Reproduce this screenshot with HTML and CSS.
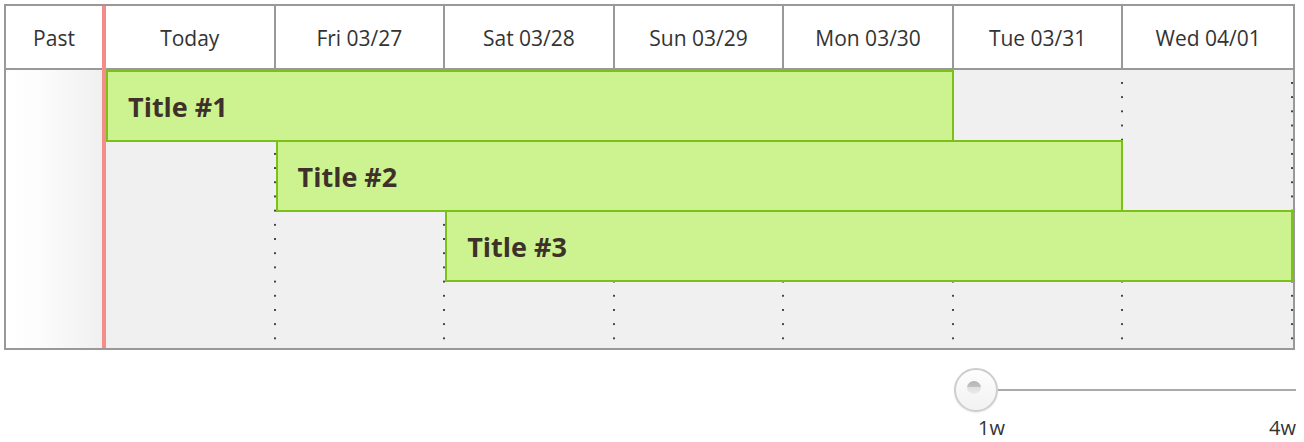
FILE: index.html
```html
<!DOCTYPE html>
<html lang="en">
<head>
<meta charset="utf-8">
<title>Timeline</title>
<link rel="stylesheet" href="styles.css">
</head>
<body>
<div class="page">
  <div class="timeline">
    <div class="hcell past-h">Past</div>
    <div class="hcell day d1">Today</div>
    <div class="hcell day d2">Fri 03/27</div>
    <div class="hcell day d3">Sat 03/28</div>
    <div class="hcell day d4">Sun 03/29</div>
    <div class="hcell day d5">Mon 03/30</div>
    <div class="hcell day d6">Tue 03/31</div>
    <div class="hcell day d7 last">Wed 04/01</div>
    <div class="hline"></div>
    <div class="past-shade"></div>
    <div class="vline d1"></div>
    <div class="vline d2"></div>
    <div class="vline d3"></div>
    <div class="vline d4"></div>
    <div class="vline d5"></div>
    <div class="vline d6"></div>
    <div class="vline d7"></div>
    <div class="bar row1 from1">Title #1</div>
    <div class="bar row2 from2">Title #2</div>
    <div class="bar row3 from3">Title #3</div>
    <div class="now"></div>
  </div>
  <div class="zoom">
    <div class="track-row">
      <div class="thumb"><span class="knob"></span></div>
      <div class="track"></div>
    </div>
    <div class="labels"><span>1w</span><span>4w</span></div>
  </div>
</div>
</body>
</html>
```

FILE: styles.css
```css
html, body {
  background: #fff;
}
body {
  margin: 4px;
  font-family: "Open Sans", "Noto Sans", sans-serif;
  color: #333;
}
.page {
  width: 1292px;
}
.timeline {
  box-sizing: border-box;
  width: 1291px;
  height: 346px;
  border: 2px solid #999;
  background: #f0f0f0;
  display: grid;
  grid-template-columns: 96px 4px repeat(7, minmax(0, 1fr));
  grid-template-rows: 62px 2px 70px 70px 70px 1fr;
}
.hcell {
  grid-row: 1;
  background: #fff;
  display: flex;
  align-items: center;
  justify-content: center;
  font-size: 21px;
  padding-top: 2px;
  box-sizing: border-box;
  color: #333;
  white-space: nowrap;
}
.past-h { grid-column: 1; }
.day {
  border-right: 2px solid #999;
}
.day.last { border-right: 0; }
.d1 { grid-column: 3; }
.d2 { grid-column: 4; }
.d3 { grid-column: 5; }
.d4 { grid-column: 6; }
.d5 { grid-column: 7; }
.d6 { grid-column: 8; }
.d7 { grid-column: 9; }
.hline {
  grid-row: 2;
  grid-column: 1 / -1;
  background: #999;
}
.past-shade {
  grid-row: 3 / -1;
  grid-column: 1;
  background: linear-gradient(to right, #ffffff 0%, #fcfcfc 35%, #f0f0f0 100%);
}
.vline {
  grid-row: 3 / -1;
  background-image: linear-gradient(#444 0, #444 2px, transparent 2px);
  background-size: 2px 14.2px;
  background-repeat: repeat-y;
  background-position: right 0 top 12px;
}
.bar {
  box-sizing: border-box;
  height: 72px;
  align-self: start;
  z-index: 1;
  border: 2px solid #7cc11a;
  background: #cdf391;
  display: flex;
  align-items: center;
  padding-left: 20px;
  font-size: 27px;
  font-weight: 700;
  color: #3e3129;
  white-space: nowrap;
}
.row1 { grid-row: 3; }
.row2 { grid-row: 4; }
.row3 { grid-row: 5; }
.from1 { grid-column: 3 / span 5; }
.from2 { grid-column: 4 / span 5; }
.from3 { grid-column: 5 / span 5; }
.now {
  grid-row: 1 / -1;
  grid-column: 2;
  background: #f38d8a;
  z-index: 2;
}
.zoom {
  width: 342px;
  margin: 18px 0 0 auto;
}
.track-row {
  display: flex;
  align-items: center;
  height: 44px;
}
.thumb {
  box-sizing: border-box;
  width: 44px;
  height: 44px;
  flex: none;
  border-radius: 50%;
  border: 2px solid #cdcdcd;
  background: linear-gradient(#fdfdfd, #f2f2f2);
  box-shadow: 0 1px 2px rgba(0, 0, 0, 0.08);
  display: flex;
  align-items: center;
  justify-content: center;
}
.knob {
  width: 14px;
  height: 13px;
  margin: -5px 0 0 -4px;
  border-radius: 50%;
  background: linear-gradient(#b3b3b3 0, #c2c2c2 50%, #e0e0e0 50%, #ebebeb 100%);
}
.track {
  flex: 1;
  height: 2px;
  background: #aaa;
}
.labels {
  display: flex;
  justify-content: space-between;
  padding-left: 24px;
  font-size: 20px;
  line-height: 26px;
  color: #333;
  margin-top: 3px;
}
```
